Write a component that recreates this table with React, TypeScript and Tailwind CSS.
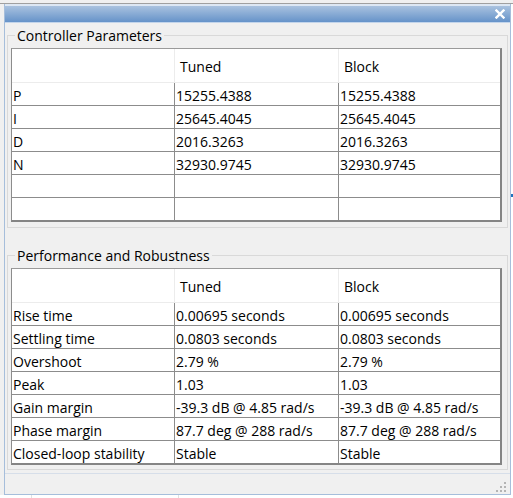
import React from "react";

type Row = [string, string, string];

const controllerRows: Row[] = [
  ["P", "15255.4388", "15255.4388"],
  ["I", "25645.4045", "25645.4045"],
  ["D", "2016.3263", "2016.3263"],
  ["N", "32930.9745", "32930.9745"],
  ["", "", ""],
  ["", "", ""],
];

const performanceRows: Row[] = [
  ["Rise time", "0.00695 seconds", "0.00695 seconds"],
  ["Settling time", "0.0803 seconds", "0.0803 seconds"],
  ["Overshoot", "2.79 %", "2.79 %"],
  ["Peak", "1.03", "1.03"],
  ["Gain margin", "-39.3 dB @ 4.85 rad/s", "-39.3 dB @ 4.85 rad/s"],
  ["Phase margin", "87.7 deg @ 288 rad/s", "87.7 deg @ 288 rad/s"],
  ["Closed-loop stability", "Stable", "Stable"],
];

function DataTable({ rows }: { rows: Row[] }) {
  return (
    <div className="w-[491px] border-l border-t border-r-2 border-b-2 border-l-[#8c8c8c] border-t-[#9a9a9a] border-r-[#858585] border-b-[#858585] bg-white">
      {/* header */}
      <div className="grid grid-cols-[163px_164px_161px] h-[34px] border-b border-[#ececec]">
        <div className="border-r border-[#ececec]" />
        <div className="border-r border-[#ececec] pl-[5px] pt-[8px] leading-[19px]">Tuned</div>
        <div className="pl-[5px] pt-[8px] leading-[19px]">Block</div>
      </div>
      {rows.map((r, i) => (
        <div
          key={i}
          className={
            "grid grid-cols-[163px_164px_161px] " +
            (i < rows.length - 1 ? "h-[23px] border-b border-[#8c8c8c]" : "h-[22px]")
          }
        >
          <div className="border-r border-[#8c8c8c] pl-[1px] pt-[3px] leading-[19px] whitespace-nowrap">{r[0]}</div>
          <div className="border-r border-[#8c8c8c] pl-[1px] pt-[3px] leading-[19px] whitespace-nowrap">{r[1]}</div>
          <div className="pl-[1px] pt-[3px] leading-[19px] whitespace-nowrap">{r[2]}</div>
        </div>
      ))}
    </div>
  );
}

function GroupBox({ title, rows, className }: { title: string; rows: Row[]; className?: string }) {
  return (
    <fieldset className={"border border-[#d9d9d9] pl-[3px] pb-[5px] " + (className ?? "")}>
      <legend className="ml-[4px] px-[2px] leading-[19px]">{title}</legend>
      <div className="mt-[3px]">
        <DataTable rows={rows} />
      </div>
    </fieldset>
  );
}

export default function App() {
  return (
    <div className="w-[513px] h-[498px] overflow-hidden bg-white text-[14px] text-black font-['Open_Sans',sans-serif]">
      <div className="h-[3px] bg-[#f0f0f0]" />
      <div className="h-px bg-[#a0a0a0]" />
      <div className="flex h-[491px]">
        <div className="w-[4px] bg-[#f0f0f0]" />
        {/* dialog window */}
        <div className="w-[507px] flex flex-col border-x border-b border-[#a6bedb]">
          <div className="h-[2px] bg-[#dde7f3]" />
          <div className="h-[16px] flex items-center justify-end pr-[5px] bg-gradient-to-b from-[#a9c2df] to-[#6693c9]">
            <svg width="10" height="10" viewBox="0 0 10 10">
              <path d="M1.5 1.5 L8.5 8.5 M8.5 1.5 L1.5 8.5" stroke="#ffffff" strokeWidth="2.4" strokeLinecap="square" />
            </svg>
          </div>
          <div className="h-px bg-[#c3d5eb]" />
          <div className="flex-1 flex flex-col bg-[#f0f0f0] pt-[3px] pl-[2px] pr-[2px]">
            <GroupBox title="Controller Parameters" rows={controllerRows} />
            <GroupBox title="Performance and Robustness" rows={performanceRows} className="mt-[18px] !pb-[4px]" />
            <div className="mt-auto -ml-[2px] -mr-[2px] h-[21px] border-t border-[#d6dee9] flex justify-end items-end pr-[3px] pb-[1px]">
              <svg width="11" height="11" viewBox="0 0 11 11">
                <rect x="8" y="0" width="2" height="2" fill="#b4b4b4" />
                <rect x="4" y="4" width="2" height="2" fill="#b4b4b4" />
                <rect x="8" y="4" width="2" height="2" fill="#b4b4b4" />
                <rect x="0" y="8" width="2" height="2" fill="#b4b4b4" />
                <rect x="4" y="8" width="2" height="2" fill="#b4b4b4" />
                <rect x="8" y="8" width="2" height="2" fill="#b4b4b4" />
              </svg>
            </div>
          </div>
        </div>
        <div className="flex-1 flex flex-col bg-white">
          <div className="h-[190px]" />
          <div className="h-[3px] bg-[#1e73be]" />
        </div>
      </div>
      <div className="h-[3px] flex">
        <div className="w-[31px]" />
        <div className="w-px bg-[#e0e0e0]" />
        <div className="w-[146px]" />
        <div className="w-px bg-[#e0e0e0]" />
      </div>
    </div>
  );
}
